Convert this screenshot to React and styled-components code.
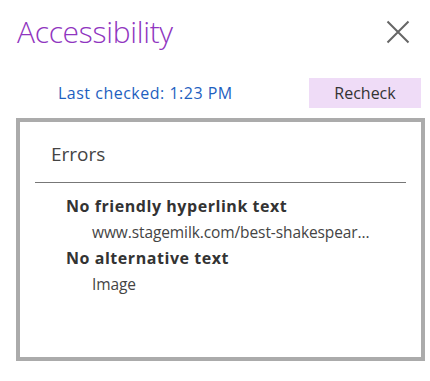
import React from "react";
import styled, { createGlobalStyle } from "styled-components";

const Global = createGlobalStyle`
  html, body { margin: 0; padding: 0; background: #fff; }
  body { font-family: "Open Sans", "Noto Sans", sans-serif; }
`;

const Pane = styled.div`
  width: 430px;
  height: 381px;
  box-sizing: border-box;
  padding: 14px 5px 0 16px;
  display: flex;
  flex-direction: column;
`;

const Header = styled.div`
  display: flex;
  align-items: center;
  justify-content: space-between;
  height: 36px;
`;

const Title = styled.h1`
  margin: 0;
  padding-left: 1px;
  font-size: 30px;
  font-weight: 300;
  color: #9035c0;
  line-height: 36px;
  letter-spacing: -0.3px;
`;

const CloseButton = styled.button`
  border: 0;
  background: none;
  padding: 0;
  margin-right: 14px;
  width: 26px;
  height: 26px;
  display: flex;
  align-items: center;
  justify-content: center;
  cursor: pointer;
`;

const StatusRow = styled.div`
  display: flex;
  align-items: center;
  justify-content: space-between;
  margin-top: 28px;
  height: 30px;
`;

const LastChecked = styled.span`
  margin-left: 42px;
  font-size: 16px;
  color: #1e5fbf;
  letter-spacing: 0.5px;
`;

const Recheck = styled.button`
  width: 112px;
  height: 30px;
  border: 0;
  background: #efdcf7;
  color: #333;
  font-family: inherit;
  font-size: 16px;
  margin-right: 4px;
  padding: 0;
`;

const Box = styled.section`
  margin-top: 10px;
  width: 409px;
  height: 243px;
  box-sizing: border-box;
  border: 4px solid #ababab;
  padding: 19px 15px 0 15px;
`;

const BoxTitle = styled.h2`
  margin: 0 0 0 16px;
  font-size: 19px;
  font-weight: 400;
  color: #444;
  line-height: 26px;
`;

const Divider = styled.hr`
  margin: 15px 0 0 0;
  border: 0;
  border-top: 1px solid #777;
  width: 371px;
`;

const List = styled.div`
  margin-top: 10px;
  display: flex;
  flex-direction: column;
`;

const IssueTitle = styled.div`
  padding-left: 31px;
  font-size: 16px;
  font-weight: 700;
  color: #333;
  line-height: 26px;
  letter-spacing: 0.55px;
`;

const IssueItem = styled.div`
  padding-left: 57px;
  font-size: 15.5px;
  color: #444;
  line-height: 26px;
  white-space: nowrap;
  letter-spacing: -0.1px;
`;

export default function App() {
  return (
    <>
      <Global />
      <Pane>
        <Header>
          <Title>Accessibility</Title>
          <CloseButton aria-label="Close">
            <svg width="24" height="24" viewBox="0 0 24 24">
              <path d="M1.5 1.5 L22.5 22.5 M22.5 1.5 L1.5 22.5" stroke="#666" strokeWidth="2" fill="none" />
            </svg>
          </CloseButton>
        </Header>
        <StatusRow>
          <LastChecked>Last checked: 1:23 PM</LastChecked>
          <Recheck>Recheck</Recheck>
        </StatusRow>
        <Box>
          <BoxTitle>Errors</BoxTitle>
          <Divider />
          <List>
            <IssueTitle>No friendly hyperlink text</IssueTitle>
            <IssueItem>www.stagemilk.com/best-shakespear...</IssueItem>
            <IssueTitle>No alternative text</IssueTitle>
            <IssueItem>Image</IssueItem>
          </List>
        </Box>
      </Pane>
    </>
  );
}
